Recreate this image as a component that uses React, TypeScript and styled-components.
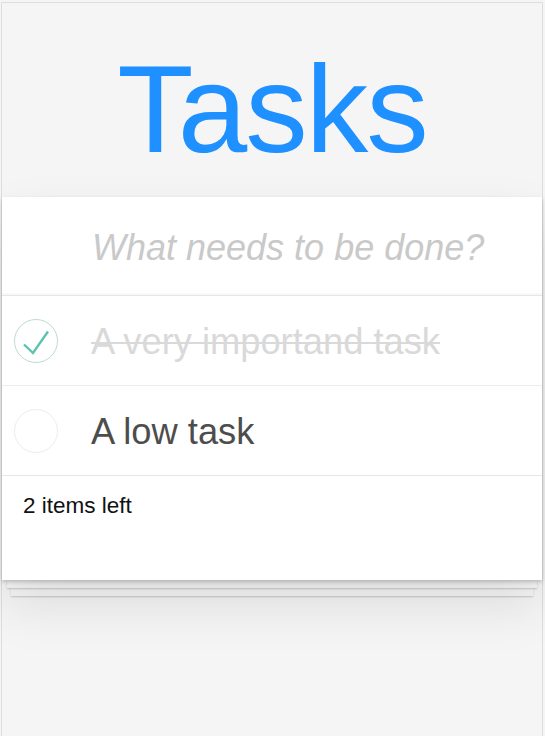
import React from "react";
import styled, { createGlobalStyle } from "styled-components";

const GlobalStyle = createGlobalStyle`
  html, body {
    margin: 0;
    padding: 0;
    background: #f5f5f5;
    font-family: "Liberation Sans", Arial, sans-serif;
    overflow: hidden;
  }
  * { box-sizing: border-box; }
`;

const Frame = styled.div`
  margin: 2px 2px 0 1px;
  border: 1px solid #dedede;
  border-bottom: none;
  min-height: 734px;
  display: flex;
  flex-direction: column;
`;

const Header = styled.header`
  height: 194px;
  padding-top: 43px;
  display: flex;
  justify-content: center;
`;

const Title = styled.h1`
  margin: 0;
  font-size: 125px;
  line-height: 125px;
  font-weight: 400;
  letter-spacing: -2px;
  color: #1e90ff;
`;

const Card = styled.section`
  background: #fff;
  box-shadow: 0 2px 4px rgba(0, 0, 0, 0.2), 0 25px 50px 0 rgba(0, 0, 0, 0.1);
  position: relative;
  z-index: 2;
`;

const NewTodo = styled.div`
  height: 99px;
  padding: 4px 0 0 90px;
  display: flex;
  align-items: center;
  font-size: 36px;
  font-style: italic;
  color: #c9c9c9;
  box-shadow: inset 0 -2px 1px rgba(0, 0, 0, 0.03);
  border-bottom: 1px solid #e6e6e6;
`;

const List = styled.ul`
  list-style: none;
  margin: 0;
  padding: 0;
`;

const Item = styled.li`
  height: 90px;
  display: flex;
  align-items: center;
  padding: 2px 0 0 12px;
  gap: 33px;
  border-bottom: 1px solid #ededed;
`;

const Toggle = styled.span<{ $done: boolean }>`
  width: 44px;
  height: 44px;
  border-radius: 50%;
  border: 1px solid ${(p) => (p.$done ? "#bddad5" : "#ededed")};
  display: flex;
  align-items: center;
  justify-content: center;
  flex: none;
  margin-top: -2px;
`;

const Label = styled.span<{ $done: boolean }>`
  font-size: 36.3px;
  color: ${(p) => (p.$done ? "#d9d9d9" : "#4d4d4d")};
  text-decoration: ${(p) => (p.$done ? "line-through" : "none")};
  text-decoration-thickness: 2px;
  white-space: nowrap;
`;

const Footer = styled.footer`
  height: 105px;
  padding: 17px 21px;
  font-size: 22.5px;
  color: #111;
  border-top: 1px solid #e6e6e6;
  margin-top: -1px;
`;

const StackLayer = styled.div<{ $inset: number; $z: number }>`
  height: 8px;
  margin: 0 ${(p) => p.$inset}px;
  background: #f6f6f6;
  box-shadow: 0 1px 2px rgba(0, 0, 0, 0.2);
  position: relative;
  z-index: ${(p) => p.$z};
`;

const Check = () => (
  <svg width="28" height="28" viewBox="0 0 28 28">
    <polyline
      points="2,17.5 11,26 26,4.5"
      fill="none"
      stroke="#5dc2af"
      strokeWidth="2.4"
    />
  </svg>
);

const todos = [
  { text: "A very importand task", done: true },
  { text: "A low task", done: false },
];

export default function App() {
  return (
    <>
      <GlobalStyle />
      <Frame>
        <Header>
          <Title>Tasks</Title>
        </Header>
        <Card>
          <NewTodo>What needs to be done?</NewTodo>
          <List>
            {todos.map((t) => (
              <Item key={t.text}>
                <Toggle $done={t.done}>{t.done && <Check />}</Toggle>
                <Label $done={t.done}>{t.text}</Label>
              </Item>
            ))}
          </List>
          <Footer>2 items left</Footer>
        </Card>
        <StackLayer $inset={5} $z={1} />
        <StackLayer $inset={9} $z={0} />
      </Frame>
    </>
  );
}
